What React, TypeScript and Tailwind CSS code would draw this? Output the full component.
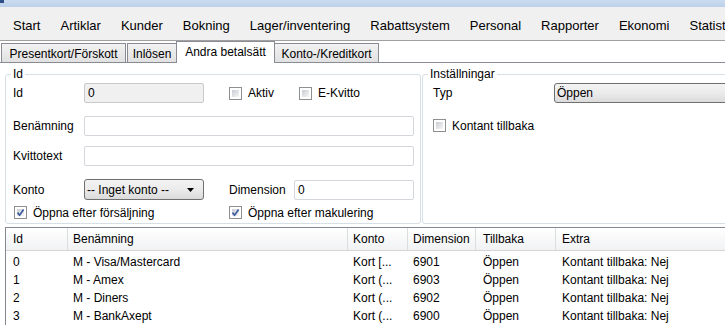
import React from 'react';

const menuItems = ['Start', 'Artiklar', 'Kunder', 'Bokning', 'Lager/inventering', 'Rabattsystem', 'Personal', 'Rapporter', 'Ekonomi', 'Statistik'];

const rows = [
  { id: '0', name: 'M - Visa/Mastercard', konto: 'Kort [...', dim: '6901' },
  { id: '1', name: 'M - Amex', konto: 'Kort (...', dim: '6903' },
  { id: '2', name: 'M - Diners', konto: 'Kort (...', dim: '6902' },
  { id: '3', name: 'M - BankAxept', konto: 'Kort (...', dim: '6900' },
];

const cols = 'grid grid-cols-[62px_280px_60px_68px_80px_1fr]';

function CheckBox({ checked }: { checked?: boolean }) {
  return (
    <span className="relative flex h-[13px] w-[13px] shrink-0 border border-[#8e8f8f] bg-white p-[2px]">
      <span className="h-full w-full bg-linear-to-br from-[#c9cdd3] to-[#f6f6f6]" />
      {checked && (
        <svg className="absolute left-[1px] top-[1px]" width="9" height="9" viewBox="0 0 9 9">
          <path d="M1.5 4.6 L3.6 7.2 L7.6 1.4" fill="none" stroke="#3e5ca0" strokeWidth="1.7" />
        </svg>
      )}
    </span>
  );
}

function Check({ label, checked, className = '' }: { label: string; checked?: boolean; className?: string }) {
  return (
    <div className={`flex items-center ${className}`}>
      <CheckBox checked={checked} />
      <span className="ml-[6px] whitespace-nowrap">{label}</span>
    </div>
  );
}

function TextBox({ value = '', className = '' }: { value?: string; className?: string }) {
  return (
    <div className={`flex h-[20px] items-center rounded-[2px] border border-[#d3d7dc] bg-white pl-[3px] ${className}`}>
      {value}
    </div>
  );
}

function Combo({ value, className = '' }: { value: string; className?: string }) {
  return (
    <div
      className={`flex shrink-0 items-center justify-between rounded-[3px] border border-[#707070] bg-linear-to-b from-[#f3f3f3] via-[#ebebeb] to-[#dbdbdb] pl-[2px] pr-[9px] ${className}`}
    >
      <span className="whitespace-nowrap">{value}</span>
      <svg width="7" height="4" viewBox="0 0 7 4">
        <path d="M0 0 H7 L3.5 4 Z" fill="#000" />
      </svg>
    </div>
  );
}

function Tab({ label, active, className = '' }: { label: string; active?: boolean; className?: string }) {
  if (active) {
    return (
      <div className={`relative z-10 -mb-px flex h-[22px] items-center justify-center border border-b-0 border-[#898c95] bg-white pb-[1px] whitespace-nowrap ${className}`}>
        {label}
      </div>
    );
  }
  return (
    <div className={`flex h-[19px] items-center justify-center border border-b-0 border-[#898c95] bg-linear-to-b from-[#f2f2f2] to-[#e1e1e1] pt-[2px] whitespace-nowrap ${className}`}>
      {label}
    </div>
  );
}

export default function App() {
  return (
    <div className="h-[325px] w-[725px] overflow-hidden bg-white font-['Liberation_Sans',Arial,sans-serif] text-[12px] leading-none text-black">
      {/* window caption strip */}
      <div className="flex h-[7px] bg-linear-to-b from-[#cbdcf1] to-[#bcd1ea]">
        <span className="h-[3px] w-[4px] bg-[#2d5088]" />
      </div>

      {/* main menu */}
      <nav className="flex h-[34px] items-center gap-[20px] overflow-hidden border-b border-[#a0a0a0] bg-[#f0f0f0] pl-[13px] pt-[3px] text-[13px]">
        {menuItems.map((m) => (
          <span key={m} className="shrink-0 whitespace-nowrap">
            {m}
          </span>
        ))}
      </nav>

      {/* tabs */}
      <div className="flex h-[22px] items-end border-b border-[#898c95]">
        <Tab label="Presentkort/Förskott" className="ml-px w-[125px]" />
        <Tab label="Inlösen" className="ml-px w-[50px]" />
        <Tab label="Andra betalsätt" active className="-ml-px w-[99px]" />
        <Tab label="Konto-/Kreditkort" className="-ml-px w-[105px]" />
      </div>

      {/* group boxes */}
      <div className="mt-[4px] flex items-start overflow-hidden pl-[5px]">
        <fieldset className="h-[157px] w-[416px] shrink-0 rounded-[3px] border border-[#d5dfe5]">
          <legend className="ml-[5px] px-[2px] leading-[14px]">Id</legend>
          <div className="flex flex-col pl-[7px]">
            <div className="mt-[2px] flex h-[20px] items-center">
              <span className="w-[71px]">Id</span>
              <div className="flex h-[20px] w-[120px] items-center rounded-[2px] border border-[#c8cacd] bg-[#f0f0f0] pl-[3px]">0</div>
              <Check label="Aktiv" className="ml-[25px] w-[70px]" />
              <Check label="E-Kvitto" />
            </div>
            <div className="mt-[13px] flex h-[20px] items-center">
              <span className="w-[71px]">Benämning</span>
              <TextBox className="w-[330px]" />
            </div>
            <div className="mt-[10px] flex h-[20px] items-center">
              <span className="w-[71px]">Kvittotext</span>
              <TextBox className="w-[330px]" />
            </div>
            <div className="mt-[13px] flex h-[21px] items-center">
              <span className="w-[71px]">Konto</span>
              <Combo value="-- Inget konto --" className="h-[21px] w-[120px]" />
              <span className="ml-[25px] w-[65px]">Dimension</span>
              <TextBox value="0" className="w-[120px]" />
            </div>
            <div className="mt-[6px] flex h-[13px] items-center">
              <Check label="Öppna efter försäljning" checked className="ml-[1px] w-[215px]" />
              <Check label="Öppna efter makulering" checked />
            </div>
          </div>
        </fieldset>

        <fieldset className="ml-[1px] h-[157px] w-[420px] shrink-0 rounded-[3px] border border-[#d5dfe5]">
          <legend className="ml-[5px] px-[2px] leading-[14px]">Inställningar</legend>
          <div className="flex flex-col pl-[10px]">
            <div className="mt-[2px] flex h-[20px] items-center">
              <span className="w-[121px] shrink-0">Typ</span>
              <Combo value="Öppen" className="h-[20px] w-[270px]" />
            </div>
            <Check label="Kontant tillbaka" className="mt-[16px] h-[13px]" />
          </div>
        </fieldset>
      </div>

      {/* list */}
      <div className="ml-[5px] mt-[3px] border-l border-t border-[#828790]">
        <div className={`${cols} h-[23px] border-b border-[#d5d5d5] bg-linear-to-b from-white to-[#f1f2f4]`}>
          <div className="flex items-center border-r border-[#dcdde0] pl-[7px]">Id</div>
          <div className="flex items-center border-r border-[#dcdde0] pl-[5px]">Benämning</div>
          <div className="flex items-center border-r border-[#dcdde0] pl-[5px]">Konto</div>
          <div className="flex items-center border-r border-[#dcdde0] pl-[5px]">Dimension</div>
          <div className="flex items-center border-r border-[#dcdde0] pl-[7px]">Tillbaka</div>
          <div className="flex items-center pl-[6px]">Extra</div>
        </div>
        <div className="pt-[2px]">
          {rows.map((r) => (
            <div key={r.id} className={`${cols} h-[18px] items-center`}>
              <span className="pl-[7px]">{r.id}</span>
              <span className="pl-[5px]">{r.name}</span>
              <span className="pl-[5px] whitespace-nowrap">{r.konto}</span>
              <span className="pl-[5px]">{r.dim}</span>
              <span className="pl-[7px]">Öppen</span>
              <span className="pl-[6px] whitespace-nowrap">Kontant tillbaka: Nej</span>
            </div>
          ))}
        </div>
      </div>
    </div>
  );
}
